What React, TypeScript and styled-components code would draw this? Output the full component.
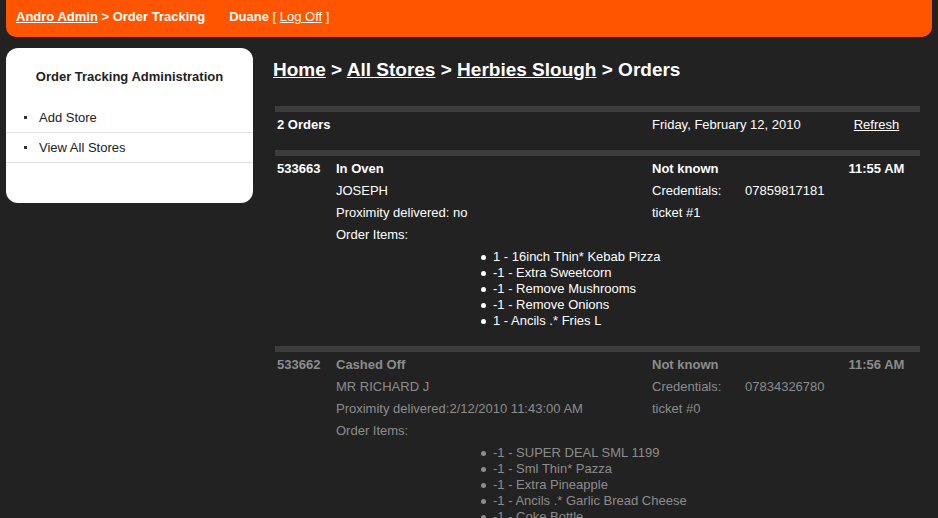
import React from "react";
import styled, { createGlobalStyle } from "styled-components";

const Global = createGlobalStyle`
  html, body { margin: 0; padding: 0; background: #222222; }
  body { font-family: "Liberation Sans", Arial, sans-serif; font-size: 13px; color: #ffffff; }
  * { box-sizing: border-box; }
`;

const Header = styled.header`
  margin: 0 6px;
  height: 37px;
  background: #ff5500;
  border-radius: 0 0 10px 10px;
  padding: 9px 10px 0;
  line-height: 16px;
  font-size: 13px;
  display: flex;
  gap: 24px;
`;

const Crumb = styled.span`
  font-weight: bold;
  color: #fff;
`;

const HLink = styled.a<{ $bold?: boolean }>`
  color: #fff;
  text-decoration: underline;
  font-weight: ${(p) => (p.$bold ? "bold" : "normal")};
`;

const User = styled.span`
  color: #fff;
  b { font-weight: bold; }
`;

const Body = styled.div`
  display: flex;
  align-items: flex-start;
  padding: 11px 18px 0 6px;
  gap: 20px;
`;

const Sidebar = styled.nav`
  width: 247px;
  flex: none;
  background: #fff;
  border-radius: 12px;
  padding: 21px 0 40px;
  color: #222;
`;

const SideTitle = styled.div`
  font-weight: bold;
  text-align: center;
  line-height: 16px;
  margin-bottom: 18px;
`;

const SideList = styled.ul`
  list-style: none;
  margin: 0;
  padding: 0;
`;

const SideItem = styled.li`
  height: 30px;
  line-height: 29px;
  border-bottom: 1px solid #e2e2e2;
  padding-left: 18px;
  display: flex;
  align-items: center;
  color: #222;
`;

const Square = styled.span`
  width: 3px;
  height: 3px;
  background: #333;
  margin-right: 12px;
  flex: none;
`;

const Main = styled.main`
  flex: 1;
  min-width: 0;
  padding-top: 11px;
`;

const Breadcrumb = styled.h1`
  margin: 0;
  font-size: 19px;
  line-height: 22px;
  font-weight: bold;
  color: #fff;
  a { color: #fff; text-decoration: underline; }
`;

const Table = styled.section`
  margin: 25px 0 0 2px;
`;

const Bar = styled.div`
  height: 6px;
  background: #3c3c3c;
  margin-bottom: 2px;
`;

const Row = styled.div`
  display: grid;
  grid-template-columns: 59px 316px 93px 90px 1fr;
  height: 22px;
  line-height: 22px;
  white-space: nowrap;
`;

const Cell = styled.div<{ $col: number; $span?: number; $bold?: boolean; $center?: boolean }>`
  grid-column: ${(p) => p.$col} / span ${(p) => p.$span ?? 1};
  font-weight: ${(p) => (p.$bold ? "bold" : "normal")};
  text-align: ${(p) => (p.$center ? "center" : "left")};
  padding-left: ${(p) => (p.$center ? 0 : 2)}px;
  a { color: inherit; text-decoration: underline; }
`;

const Summary = styled.div`
  margin-bottom: 14px;
`;

const Order = styled.div<{ $dim?: boolean }>`
  color: ${(p) => (p.$dim ? "#8c8c8c" : "#ffffff")};
`;

const Items = styled.ul`
  list-style: none;
  margin: 3px 0 17px;
  padding: 0 0 0 206px;
`;

const Item = styled.li`
  line-height: 16px;
  height: 16px;
  display: flex;
  align-items: center;
  white-space: nowrap;
`;

const Disc = styled.span`
  width: 5px;
  height: 5px;
  border-radius: 50%;
  background: currentColor;
  margin-right: 7px;
  flex: none;
`;

type OrderData = {
  id: string;
  status: string;
  name: string;
  proximity: string;
  phone: string;
  ticket: string;
  time: string;
  items: string[];
  dim?: boolean;
};

const orders: OrderData[] = [
  {
    id: "533663",
    status: "In Oven",
    name: "JOSEPH",
    proximity: "Proximity delivered: no",
    phone: "07859817181",
    ticket: "ticket #1",
    time: "11:55 AM",
    items: [
      "1 - 16inch Thin* Kebab Pizza",
      "-1 - Extra Sweetcorn",
      "-1 - Remove Mushrooms",
      "-1 - Remove Onions",
      "1 - Ancils .* Fries L",
    ],
  },
  {
    id: "533662",
    status: "Cashed Off",
    name: "MR RICHARD J",
    proximity: "Proximity delivered:2/12/2010 11:43:00 AM",
    phone: "07834326780",
    ticket: "ticket #0",
    time: "11:56 AM",
    dim: true,
    items: [
      "-1 - SUPER DEAL SML 1199",
      "-1 - Sml Thin* Pazza",
      "-1 - Extra Pineapple",
      "-1 - Ancils .* Garlic Bread Cheese",
      "-1 - Coke Bottle",
    ],
  },
];

export default function App() {
  return (
    <>
      <Global />
      <Header>
        <Crumb>
          <HLink $bold href="#">Andro Admin</HLink> &gt; Order Tracking
        </Crumb>
        <User>
          <b>Duane</b> [ <HLink href="#">Log Off</HLink> ]
        </User>
      </Header>
      <Body>
        <Sidebar>
          <SideTitle>Order Tracking Administration</SideTitle>
          <SideList>
            <SideItem><Square />Add Store</SideItem>
            <SideItem><Square />View All Stores</SideItem>
          </SideList>
        </Sidebar>
        <Main>
          <Breadcrumb>
            <a href="#">Home</a> &gt; <a href="#">All Stores</a> &gt; <a href="#">Herbies Slough</a> &gt; Orders
          </Breadcrumb>
          <Table>
            <Bar />
            <Summary>
              <Row>
                <Cell $col={1} $span={2} $bold>2 Orders</Cell>
                <Cell $col={3} $span={2}>Friday, February 12, 2010</Cell>
                <Cell $col={5} $center><a href="#">Refresh</a></Cell>
              </Row>
            </Summary>
            {orders.map((o) => (
              <Order key={o.id} $dim={o.dim}>
                <Bar />
                <Row>
                  <Cell $col={1} $bold>{o.id}</Cell>
                  <Cell $col={2} $bold>{o.status}</Cell>
                  <Cell $col={3} $bold>Not known</Cell>
                  <Cell $col={5} $bold $center>{o.time}</Cell>
                </Row>
                <Row>
                  <Cell $col={2}>{o.name}</Cell>
                  <Cell $col={3}>Credentials:</Cell>
                  <Cell $col={4}>{o.phone}</Cell>
                </Row>
                <Row>
                  <Cell $col={2}>{o.proximity}</Cell>
                  <Cell $col={3}>{o.ticket}</Cell>
                </Row>
                <Row>
                  <Cell $col={2}>Order Items:</Cell>
                </Row>
                <Items>
                  {o.items.map((it, i) => (
                    <Item key={i}><Disc />{it}</Item>
                  ))}
                </Items>
              </Order>
            ))}
          </Table>
        </Main>
      </Body>
    </>
  );
}
